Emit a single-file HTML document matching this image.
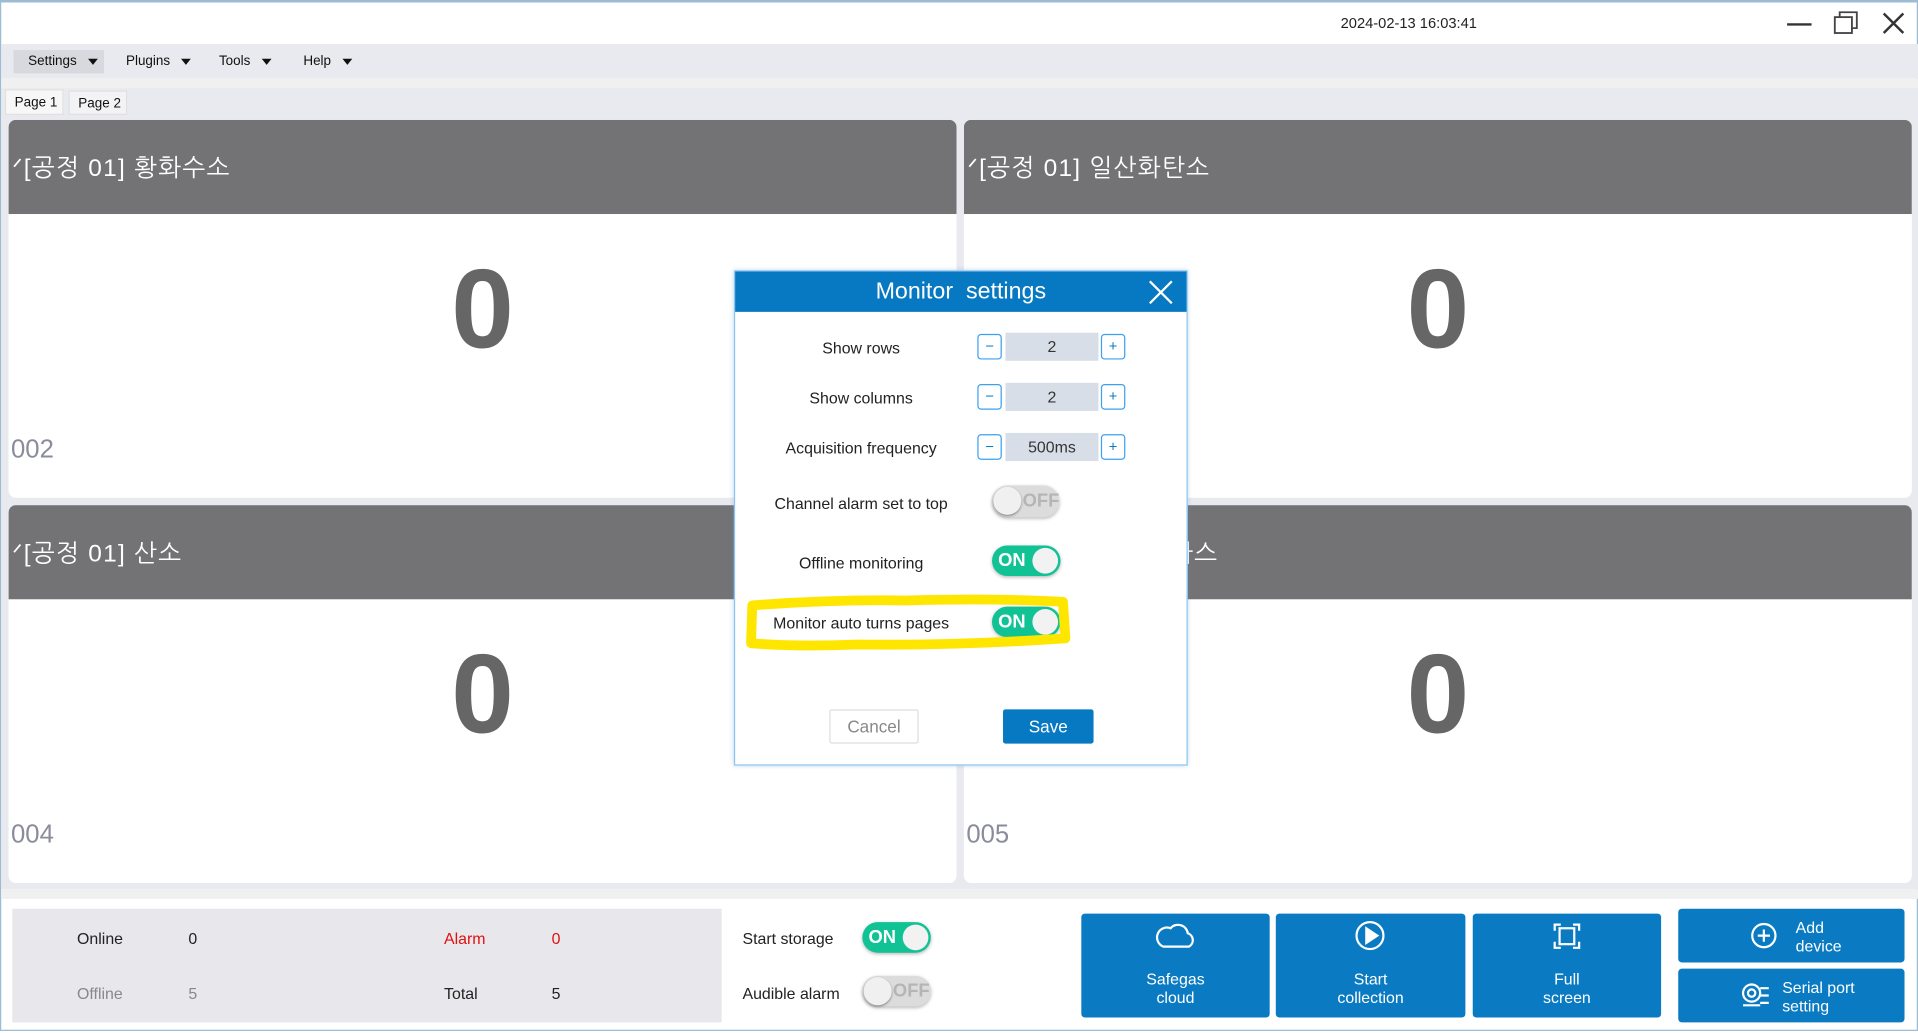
<!DOCTYPE html>
<html><head><meta charset="utf-8"><style>
*{box-sizing:border-box;margin:0;padding:0}
html,body{width:1918px;height:1031px;overflow:hidden;background:#fff}
#w{position:absolute;left:0;top:0;width:1568px;height:843px;transform:scale(1.2232,1.2230);transform-origin:0 0;font-family:"Liberation Sans","Noto Sans CJK KR",sans-serif;background:#fff;border:1px solid #9bbcd3;border-top:2px solid #9bbcd3}
.a{position:absolute}
.menu{font-size:11px;color:#111}
.tri{display:inline-block;border-left:4px solid transparent;border-right:4px solid transparent;border-top:5px solid #111;margin-left:9px;vertical-align:middle}
.panel{position:absolute;width:775px;height:309px;background:#fff;border-radius:6px;overflow:hidden}
.ph{position:absolute;left:0;top:0;width:100%;height:77px;background:#737375;color:#fff;font-size:20px;padding:27px 0 0 3px;font-family:"Liberation Sans","NanumGothic",sans-serif;letter-spacing:1px}
.big{position:absolute;top:105px;width:100%;text-align:center;font-size:92px;color:#666;font-weight:bold;line-height:100px}
.id{position:absolute;left:2px;top:258px;font-size:21px;color:#8a8c9c}
.btn{position:absolute;background:#0a7bc2;color:#fff;border-radius:3px;font-size:13px;text-align:center;line-height:15px}
.row{position:absolute;font-size:13px;color:#222;width:200px;text-align:center}
.pm{position:absolute;width:20px;height:21px;border:1px solid #3ba0f0;border-radius:3px;color:#0a7bc2;font-size:12px;text-align:center;line-height:19px;background:#fff}
.val{position:absolute;width:76px;height:23px;background:#d8dee8;color:#333;font-size:13px;text-align:center;line-height:23px}
.tg{position:absolute;width:56px;height:25px;border-radius:13px;font-size:15px;font-weight:bold;line-height:25px;box-shadow:0 1px 3px rgba(0,0,0,.3)}
.on{background:#10c294;color:#fff;padding-left:5px}
.on:after{content:"";position:absolute;right:2px;top:2px;width:21px;height:21px;border-radius:50%;background:#f2f2f2}
.off{background:#dcdcdc;color:#b5b5b5;padding-left:25px}
.off:before{content:"";position:absolute;left:1px;top:1px;width:23px;height:23px;border-radius:50%;background:#f0f0f0;box-shadow:0 1px 2px rgba(0,0,0,.4)}
</style></head><body><div id="w">
<div class="a" style="left:1095px;top:10px;font-size:12px;color:#222">2024-02-13 16:03:41</div>
<svg class="a" style="left:1455px;top:6px" width="105" height="24"><path d="M5 12H25" stroke="#333" stroke-width="2"/><rect x="44" y="6" width="14" height="13" fill="none" stroke="#444" stroke-width="1.5"/><path d="M48 6V2H62V15H58" fill="none" stroke="#444" stroke-width="1.5"/><path d="M84 3L100 19M100 3L84 19" stroke="#333" stroke-width="2"/></svg>
<div class="a" style="left:0;top:34px;width:1568px;height:28px;background:#e9eaef"></div>
<div class="a" style="left:10px;top:39px;width:74px;height:19px;background:#d8d9de"></div>
<div class="a menu" style="left:22px;top:42px">Settings<span class="tri"></span></div>
<div class="a menu" style="left:102px;top:42px">Plugins<span class="tri"></span></div>
<div class="a menu" style="left:178px;top:42px">Tools<span class="tri"></span></div>
<div class="a menu" style="left:247px;top:42px">Help<span class="tri"></span></div>
<div class="a" style="left:0;top:62px;width:1568px;height:8px;background:#f0f0f0"></div>
<div class="a" style="left:0;top:70px;width:1568px;height:655px;background:#e9eaef"></div>
<div class="a" style="left:3px;top:71px;width:48px;height:21px;background:#f7f7f7;border:1px solid #e0e0e0"></div>
<div class="a" style="left:55px;top:72px;width:48px;height:20px;background:#f3f3f5;border:1px solid #e0e0e0"></div>
<div class="a menu" style="left:11px;top:76px">Page 1</div>
<div class="a menu" style="left:63px;top:77px">Page 2</div>
<div class="panel" style="left:6px;top:96px"><div class="ph">ᐟ[공정 01] 황화수소</div><div class="big">0</div><div class="id">002</div></div>
<div class="panel" style="left:787px;top:96px"><div class="ph">ᐟ[공정 01] 일산화탄소</div><div class="big">0</div><div class="id">003</div></div>
<div class="panel" style="left:6px;top:411px"><div class="ph">ᐟ[공정 01] 산소</div><div class="big">0</div><div class="id">004</div></div>
<div class="panel" style="left:787px;top:411px"><div class="ph">ᐟ[공정 01] 가연성 가스</div><div class="big">0</div><div class="id">005</div></div>
<div class="a" style="left:0;top:725px;width:1568px;height:8px;background:#f0f0f0"></div>
<div class="a" style="left:9px;top:741px;width:580px;height:93px;background:#e8e8ec"></div>
<div class="a" style="left:62px;top:758px;font-size:13px;color:#222">Online</div>
<div class="a" style="left:153px;top:758px;font-size:13px;color:#222">0</div>
<div class="a" style="left:362px;top:758px;font-size:13px;color:#e01010">Alarm</div>
<div class="a" style="left:450px;top:758px;font-size:13px;color:#e01010">0</div>
<div class="a" style="left:62px;top:803px;font-size:13px;color:#888">Offline</div>
<div class="a" style="left:153px;top:803px;font-size:13px;color:#888">5</div>
<div class="a" style="left:362px;top:803px;font-size:13px;color:#222">Total</div>
<div class="a" style="left:450px;top:803px;font-size:13px;color:#222">5</div>
<div class="a" style="left:606px;top:758px;font-size:13px;color:#222">Start storage</div>
<div class="a" style="left:606px;top:803px;font-size:13px;color:#222">Audible alarm</div>
<div class="tg on" style="left:704px;top:752px">ON</div>
<div class="tg off" style="left:704px;top:796px">OFF</div>
<div class="btn" style="left:883px;top:745px;width:154px;height:85px;padding-top:46px">Safegas<br>cloud</div>
<div class="btn" style="left:1042px;top:745px;width:155px;height:85px;padding-top:46px">Start<br>collection</div>
<div class="btn" style="left:1203px;top:745px;width:154px;height:85px;padding-top:46px">Full<br>screen</div>
<div class="btn" style="left:1371px;top:741px;width:185px;height:44px;padding:8px 0 0 96px;text-align:left">Add<br>device</div>
<div class="btn" style="left:1371px;top:790px;width:185px;height:44px;padding:8px 0 0 85px;text-align:left">Serial port<br>setting</div>
<svg class="a" style="left:0;top:0" width="1568" height="843" fill="none" stroke="#fff" stroke-width="1.8">
<path d="M950 772H971A6 6 0 0 0 970 761A8 8 0 0 0 956 757A7 7 0 0 0 950 772Z"/>
<circle cx="1119" cy="763" r="11"/><path d="M1116 757V769L1125 763Z" fill="#fff"/>
<path d="M1270 759V754H1275M1285 754H1290V759M1290 768V773H1285M1275 773H1270V768"/><rect x="1274" y="757" width="12" height="13"/>
<circle cx="1441" cy="763" r="9.5"/><path d="M1441 758V768M1436 763H1446"/>
<circle cx="1431" cy="810" r="7"/><circle cx="1431" cy="810" r="3"/><path d="M1424 820H1438M1438 806H1445M1438 812H1445M1438 818H1445"/>
</svg>
<div class="a" style="left:599px;top:219px;width:371px;height:405px;background:#fff;border:1px solid #8cc4ec;box-shadow:0 0 4px rgba(80,150,220,.4)"></div>
<div class="a" style="left:600px;top:220px;width:369px;height:33px;background:#0679c2;color:#fff;font-size:19px;text-align:center;line-height:33px">Monitor&nbsp; settings</div>
<svg class="a" style="left:936px;top:225px" width="24" height="24"><path d="M3 3L21 21M21 3L3 21" stroke="#fff" stroke-width="1.8"/></svg>
<div class="row" style="left:603px;top:275px">Show rows</div>
<div class="row" style="left:603px;top:316px">Show columns</div>
<div class="row" style="left:603px;top:357px">Acquisition frequency</div>
<div class="row" style="left:603px;top:402px">Channel alarm set to top</div>
<div class="row" style="left:603px;top:451px">Offline monitoring</div>
<div class="row" style="left:603px;top:500px">Monitor auto turns pages</div>
<div class="pm" style="left:798px;top:271px">−</div><div class="val" style="left:821px;top:270px">2</div><div class="pm" style="left:899px;top:271px">+</div>
<div class="pm" style="left:798px;top:312px">−</div><div class="val" style="left:821px;top:311px">2</div><div class="pm" style="left:899px;top:312px">+</div>
<div class="pm" style="left:798px;top:353px">−</div><div class="val" style="left:821px;top:352px">500ms</div><div class="pm" style="left:899px;top:353px">+</div>
<div class="tg off" style="left:810px;top:395px;width:55px;height:26px">OFF</div>
<div class="tg on" style="left:810px;top:444px;width:56px">ON</div>
<div class="tg on" style="left:810px;top:494px;width:56px">ON</div>
<svg class="a" style="left:0;top:0" width="1568" height="843" fill="none"><path d="M614 493Q680 488 740 489Q810 487 868 490L870 520Q780 526 700 525Q650 527 613 524Z" stroke="#ffe600" stroke-width="8" stroke-linejoin="round"/></svg>
<div class="a" style="left:677px;top:578px;width:73px;height:28px;border:1px solid #ddd;color:#888;font-size:14px;text-align:center;line-height:26px;border-radius:2px">Cancel</div>
<div class="a" style="left:819px;top:578px;width:74px;height:28px;background:#0679c2;color:#fff;font-size:14px;text-align:center;line-height:28px;border-radius:2px">Save</div>
</div></body></html>
